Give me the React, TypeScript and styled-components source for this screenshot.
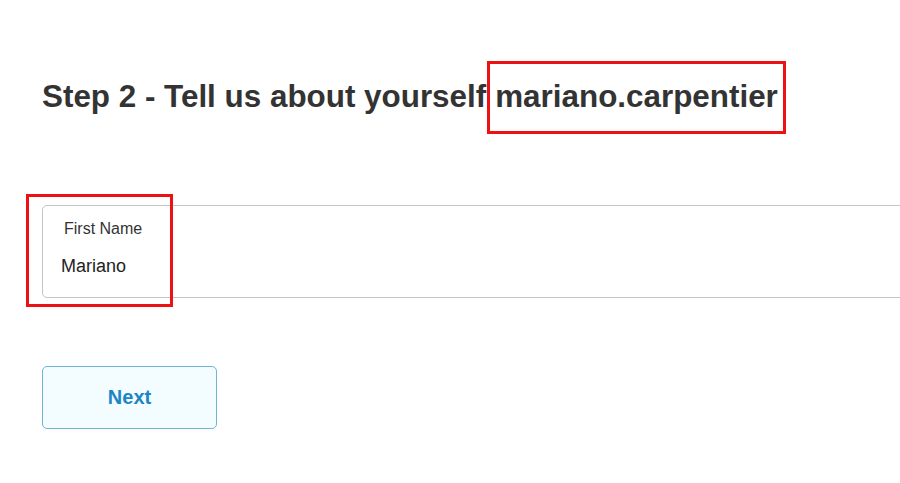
import * as React from 'react';
import styled, { createGlobalStyle } from 'styled-components';

const GlobalStyle = createGlobalStyle`
    html, body {
        margin: 0;
        padding: 0;
        background: #ffffff;
        overflow: hidden;
    }
    body {
        font-family: "Liberation Sans", Arial, Helvetica, sans-serif;
        color: #333333;
    }
`;

const Page = styled.div`
    box-sizing: border-box;
    width: 900px;
    height: 483px;
    padding: 61px 0 0 42px;
    overflow: hidden;
`;

const Title = styled.h1`
    margin: 0;
    font-size: 31.4px;
    line-height: 36px;
    font-weight: 700;
    color: #333333;
    white-space: nowrap;
`;

const Highlight = styled.span`
    display: inline-block;
    margin-left: 1px;
    padding: 15px 5px 16px 5px;
    border: 3px solid #ee1111;
`;

const FieldWrap = styled.div`
    position: relative;
    margin-top: 71px;
    width: 900px;
`;

const Field = styled.div`
    box-sizing: border-box;
    height: 93px;
    padding: 14px 0 0 18px;
    border: 1px solid #c4c4c4;
    border-radius: 5px;
    background: #ffffff;
`;

const Label = styled.div`
    margin-left: 3px;
    font-size: 16px;
    line-height: 18px;
    color: #333333;
`;

const Value = styled.div`
    margin-top: 18px;
    font-size: 18px;
    line-height: 21px;
    color: #222222;
`;

const Marker = styled.div`
    position: absolute;
    left: -16px;
    top: -11px;
    width: 147px;
    height: 113px;
    box-sizing: border-box;
    border: 3px solid #ee1111;
    pointer-events: none;
`;

const NextButton = styled.button`
    display: flex;
    align-items: center;
    justify-content: center;
    box-sizing: border-box;
    width: 175px;
    height: 63px;
    margin-top: 68px;
    border: 1px solid #6fb6d6;
    border-radius: 5px;
    background: #f3fcff;
    color: #1a86c4;
    font-family: "Liberation Sans", Arial, sans-serif;
    font-size: 20px;
    font-weight: 700;
    cursor: pointer;
`;

const App: React.FC = () => {
    const [firstName] = React.useState('Mariano');

    return (
        <Page>
            <GlobalStyle />
            <Title>
                Step 2 - Tell us about yourself<Highlight>mariano.carpentier</Highlight>
            </Title>
            <FieldWrap>
                <Field>
                    <Label>First Name</Label>
                    <Value>{ firstName }</Value>
                </Field>
                <Marker />
            </FieldWrap>
            <NextButton>Next</NextButton>
        </Page>
    );
};

export default App;
